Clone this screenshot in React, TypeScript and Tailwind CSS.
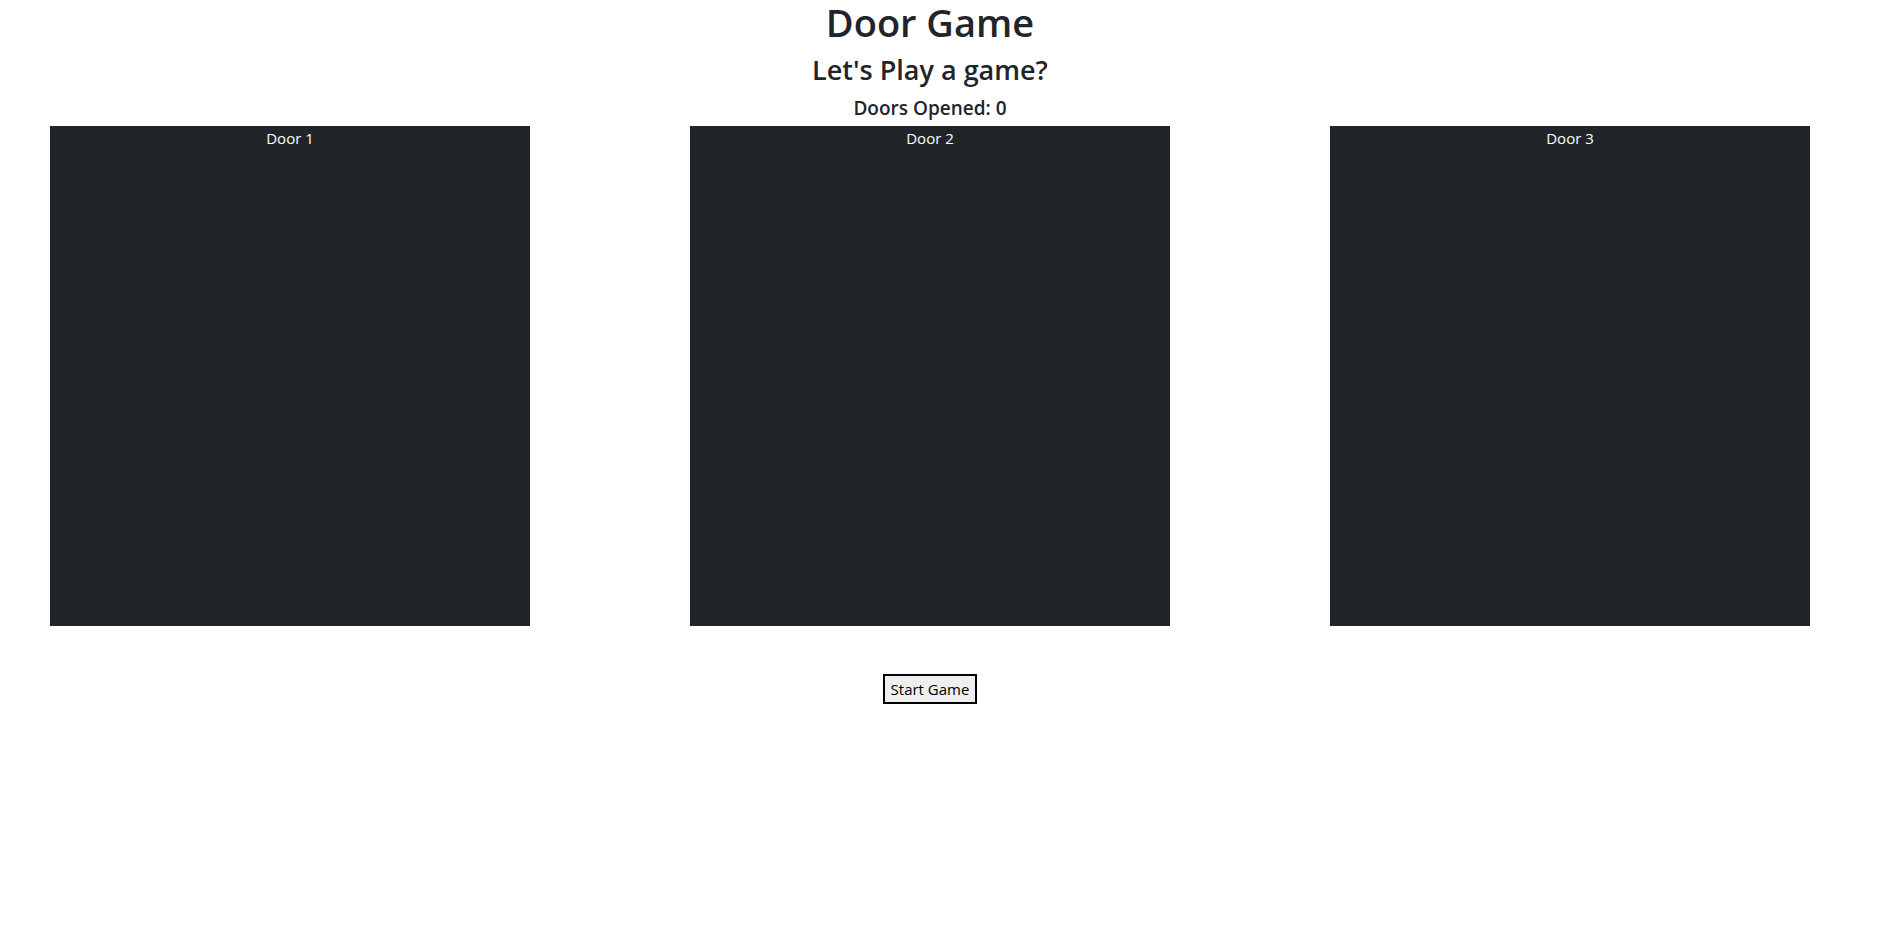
import { useState } from "react";

const doors = ["Door 1", "Door 2", "Door 3"];

const App = () => {
  const [opened, setOpened] = useState(0);

  return (
    <div
      className="w-[1860px] bg-white text-center text-[#212529]"
      style={{ fontFamily: '"Open Sans", "Noto Sans", sans-serif' }}
    >
      <h1 className="text-[38px] font-semibold leading-[44px]">Door Game</h1>
      <h3 className="mt-[9px] text-[27px] font-semibold leading-[34px]">Let's Play a game?</h3>
      <h5 className="mt-[9px] text-[19px] font-semibold leading-[24px]">Doors Opened: {opened}</h5>

      <div className="mt-[6px] flex justify-between px-[50px]">
        {doors.map((door) => (
          <div key={door} className="h-[500px] w-[480px] bg-[#212529] text-[15px] leading-[24px] text-white">
            {door}
          </div>
        ))}
      </div>

      <div className="mt-[48px] flex justify-center">
        <button
          className="border-2 border-black bg-[#efefef] px-[6px] py-[2px] text-[15px] leading-[22px] text-black"
          onClick={() => setOpened(0)}
        >
          Start Game
        </button>
      </div>
    </div>
  );
};

export default App;
